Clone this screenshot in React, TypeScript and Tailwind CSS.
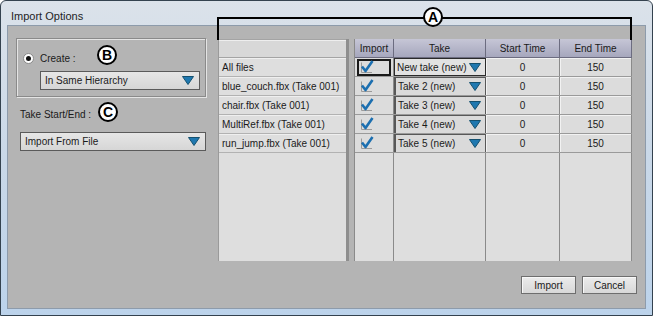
const files = [
  "All files",
  "blue_couch.fbx (Take 001)",
  "chair.fbx (Take 001)",
  "MultiRef.fbx (Take 001)",
  "run_jump.fbx (Take 001)",
];

const takes = ["New take (new)", "Take 2 (new)", "Take 3 (new)", "Take 4 (new)", "Take 5 (new)"];

function Arrow() {
  return (
    <svg width="12" height="9" viewBox="0 0 12 9" className="shrink-0">
      <polygon points="0.5,0.5 11.5,0.5 6,8.5" fill="#1f78b0" stroke="#14506f" strokeWidth="1" />
    </svg>
  );
}

function Check() {
  return (
    <svg width="14" height="14" viewBox="0 0 14 14">
      <path d="M1.5 2.5 V12.5 H12" fill="none" stroke="#9a9a9a" strokeWidth="1" />
      <path d="M2 6.5 L5.5 11 L12.5 1" fill="none" stroke="#1c6fb0" strokeWidth="2.6" strokeLinejoin="round" />
    </svg>
  );
}

function Badge({ letter, className }: { letter: string; className: string }) {
  return (
    <div
      className={`absolute flex h-[20px] w-[20px] items-center justify-center rounded-full border-2 border-black bg-white text-[14px] font-bold leading-none text-black ${className}`}
    >
      {letter}
    </div>
  );
}

function Dropdown({ label, className }: { label: string; className: string }) {
  return (
    <div
      className={`flex h-[19px] items-center justify-between border border-[#5a5a5a] bg-gradient-to-b from-[#e6e6e6] to-[#d6d6d6] pl-[4px] pr-[5px] text-[10px] text-[#1a1a1a] ${className}`}
    >
      <span>{label}</span>
      <Arrow />
    </div>
  );
}

function Button({ label }: { label: string }) {
  return (
    <div className="flex h-[18px] w-[55px] items-center justify-center border border-[#6e6e6e] bg-gradient-to-b from-[#ececec] to-[#d8d8d8] text-[10px] text-[#1a1a1a] shadow-[inset_1px_1px_0_#f8f8f8]">
      {label}
    </div>
  );
}

export default function App() {
  return (
    <div className="relative h-[316px] w-[653px] overflow-hidden bg-white font-['Liberation_Sans',Arial,sans-serif]">
      <div className="flex h-full flex-col rounded-t-[6px] border border-[#34424f] bg-gradient-to-b from-[#dbe2ea] via-[#c9d8e8] to-[#bcd3eb] px-[6px] pb-[6px]">
        <div className="flex h-[24px] items-center pl-[4px] pt-[6px] text-[11px] text-[#1e1e1e]">Import Options</div>

        <div className="flex flex-1 flex-col border border-[#8d9bab] bg-[#b4b4b4]">
          <div className="flex pl-[8px] pt-[12px]">
            {/* left options */}
            <div className="flex w-[190px] flex-col">
              <div className="flex h-[59px] flex-col border border-[#8a8a8a] pl-[6px] pr-[5px] pt-[13px] shadow-[inset_1px_1px_0_#e4e4e4,1px_1px_0_#e4e4e4]">
                <div className="flex h-[12px] items-center">
                  <div className="flex h-[11px] w-[11px] items-center justify-center rounded-full border border-[#8a8a8a] bg-white">
                    <div className="h-[5px] w-[5px] rounded-full bg-[#111]" />
                  </div>
                  <span className="ml-[6px] text-[10px] text-[#1a1a1a]">Create :</span>
                </div>
                <Dropdown label="In Same Hierarchy" className="ml-[17px] mt-[7px]" />
              </div>
              <div className="mt-[10px] pl-[4px] text-[10px] text-[#1a1a1a]">Take Start/End :</div>
              <Dropdown label="Import From File" className="ml-[4px] mt-[10px]" />
            </div>

            {/* files list */}
            <div className="ml-[12px] mt-px flex h-[222px] w-[131px] flex-col border-l border-r-[3px] border-l-[#9a9a9a] border-r-[#8e8e8e] bg-[#dedede] text-[10px] text-[#1a1a1a]">
              <div className="h-[19px] shrink-0 border-b border-t border-[#a4a4a4] bg-[#d8d8d8] shadow-[inset_0_1px_0_#eeeeee]" />
              {files.map((f) => (
                <div key={f} className="flex h-[19px] shrink-0 items-center border-b border-[#b2b2b2] pl-[3px] shadow-[inset_0_1px_0_#efefef]">
                  {f}
                </div>
              ))}
            </div>

            {/* takes table */}
            <div className="ml-[5px] mt-px flex h-[222px] w-[278px] flex-col border-l border-[#8a8a8a] bg-[#dedede] text-[10px] text-[#1a1a1a]">
              <div className="flex h-[19px] shrink-0 border-b border-[#6c6c80] bg-gradient-to-b from-[#c6c6d6] to-[#a6a7bd]">
                <div className="flex w-[39px] items-center justify-center border-r border-[#6c6c80]">Import</div>
                <div className="flex w-[92px] items-center justify-center border-r border-[#6c6c80]">Take</div>
                <div className="flex w-[74px] items-center justify-center border-r border-[#6c6c80]">Start Time</div>
                <div className="flex w-[72px] items-center justify-center border-r border-[#6c6c80]">End Time</div>
              </div>
              {takes.map((t, i) => (
                <div key={t} className="flex h-[19px] shrink-0 border-b border-[#9a9a9a]">
                  <div className="flex w-[39px] items-center border-r border-[#8a8a8a] bg-[#dcdcdc] pl-[2px]">
                    <div
                      className={`flex h-[17px] w-[34px] items-center pl-[1px] ${i === 0 ? "border-2 border-[#1a1a1a]" : "border-2 border-transparent"}`}
                    >
                      <Check />
                    </div>
                  </div>
                  <div
                    className={`flex w-[92px] items-center justify-between border-r pl-[2px] pr-[4px] ${i === 0 ? "border border-[#2a2a2a] bg-[#e2e2e2]" : "border-l-2 border-t border-l-[#585858] border-r-[#585858] border-t-[#585858] bg-[#dadada]"}`}
                  >
                    <span>{t}</span>
                    <Arrow />
                  </div>
                  <div className="flex w-[74px] items-center justify-center border-r border-[#8a8a8a] bg-[#dcdcdc] shadow-[inset_1px_1px_0_#f2f2f2]">
                    0
                  </div>
                  <div className="flex w-[72px] items-center justify-center border-r border-[#8a8a8a] bg-[#dcdcdc] shadow-[inset_1px_1px_0_#f2f2f2]">
                    150
                  </div>
                </div>
              ))}
              <div className="flex flex-1">
                <div className="w-[39px] border-r border-[#8a8a8a]" />
                <div className="w-[92px] border-r border-[#8a8a8a]" />
                <div className="w-[74px] border-r border-[#8a8a8a]" />
                <div className="w-[72px] border-r border-[#8a8a8a]" />
              </div>
            </div>
          </div>

          <div className="mt-[15px] flex justify-end gap-[6px] pr-[8px]">
            <Button label="Import" />
            <Button label="Cancel" />
          </div>
        </div>
      </div>

      {/* annotations */}
      <div className="absolute left-[217px] top-[17px] h-[23px] w-[415px] border-l-2 border-r-2 border-t-2 border-black" />
      <Badge letter="A" className="left-[423px] top-[7px]" />
      <Badge letter="B" className="left-[97px] top-[45px]" />
      <Badge letter="C" className="left-[98px] top-[102px]" />
    </div>
  );
}
